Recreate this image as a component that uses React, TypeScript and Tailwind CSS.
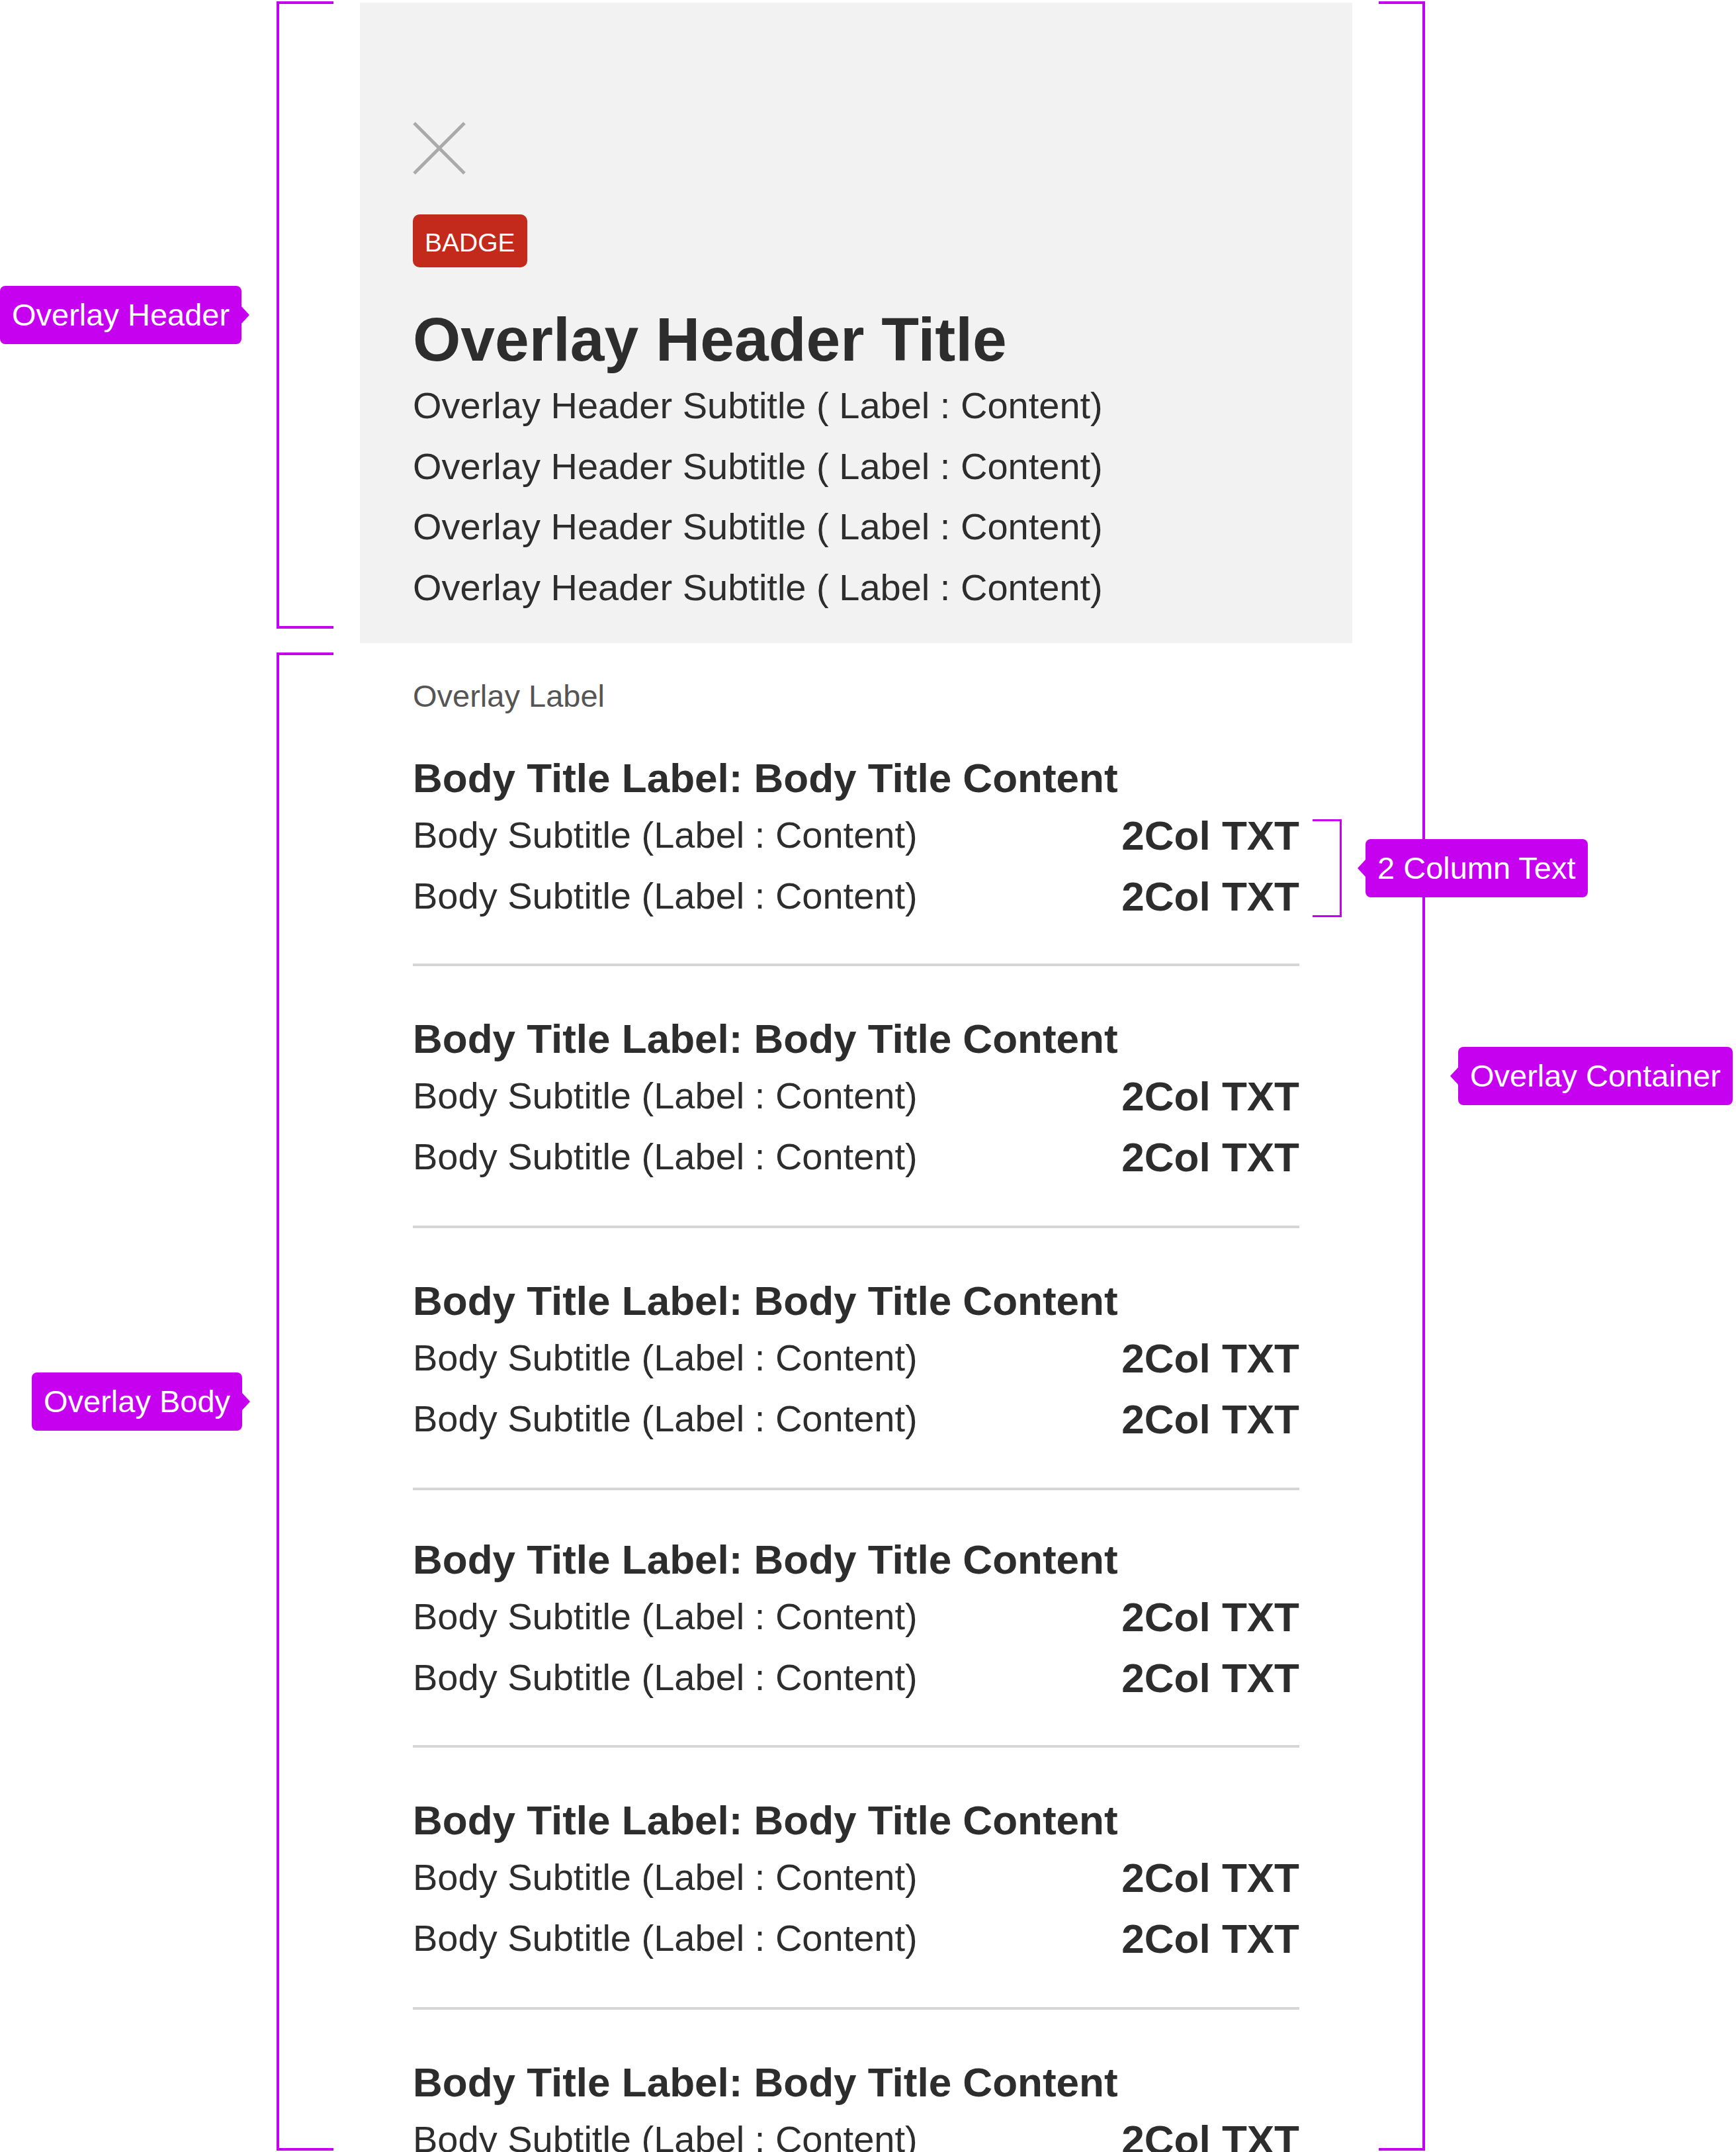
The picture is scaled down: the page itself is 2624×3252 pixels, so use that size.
const blocks = [
  { pt: "pt-[56px]", pb: "pb-[56px]", note: true },
  { pt: "pt-[70px]", pb: "pb-[58px]", note: false },
  { pt: "pt-[70px]", pb: "pb-[58px]", note: false },
  { pt: "pt-[65px]", pb: "pb-[56px]", note: false },
  { pt: "pt-[70px]", pb: "pb-[58px]", note: false },
  { pt: "pt-[70px]", pb: "pb-[58px]", note: false },
];

const subtitles = [1, 2, 3, 4];

// annotation tag with the little pointer on one side
const Tag = ({ label, side }: { label: string; side: "left" | "right" }) => (
  <div className="relative h-[88px] shrink-0 rounded-[8px] bg-[#c501f0] px-[18px] text-[47px] leading-[88px] whitespace-nowrap text-white">
    {label}
    {side === "right" ? (
      <svg
        className="absolute top-[31px] right-[-12px]"
        width="12"
        height="26"
        viewBox="0 0 12 26"
      >
        <polygon points="0,0 12,13 0,26" fill="#c501f0" />
      </svg>
    ) : (
      <svg
        className="absolute top-[31px] left-[-12px]"
        width="12"
        height="26"
        viewBox="0 0 12 26"
      >
        <polygon points="12,0 0,13 12,26" fill="#c501f0" />
      </svg>
    )}
  </div>
);

const BodyBlock = ({ pt, pb, note }: { pt: string; pb: string; note: boolean }) => (
  <div className={`border-b-4 border-[#d6d6d6] ${pt} ${pb}`}>
    <div className="text-[62px] leading-[80px] font-bold whitespace-nowrap">
      Body Title Label: Body Title Content
    </div>
    <div className="relative">
      {[0, 1].map((i) => (
        <div key={i} className="flex h-[92px] items-baseline justify-between">
          <span className="text-[56px] leading-[92px] whitespace-nowrap">
            Body Subtitle (Label : Content)
          </span>
          <span className="relative top-[3px] text-[62px] leading-[87px] font-bold whitespace-nowrap">
            2Col TXT
          </span>
        </div>
      ))}
      {note && (
        <div className="absolute top-[22px] left-full ml-[20px] flex h-[148px] items-center">
          <div className="h-full w-[44px] border-t-[3px] border-r-[3px] border-b-[3px] border-[#c501f0]" />
          <div className="ml-[36px]">
            <Tag label="2 Column Text" side="left" />
          </div>
        </div>
      )}
    </div>
  </div>
);

const App = () => {
  return (
    <div className="flex h-[3252px] w-[2624px] items-start overflow-hidden bg-white font-['Liberation_Sans',Arial,sans-serif] text-[#2d2d2d]">
      {/* left annotations */}
      <div className="flex w-[504px] shrink-0 flex-col pt-[2px]">
        <div className="flex h-[948px] items-center justify-between">
          <Tag label="Overlay Header" side="right" />
          <div className="h-full w-[86px] border-t-4 border-b-4 border-l-4 border-[#c501f0]" />
        </div>
        <div className="mt-[36px] flex h-[2264px] items-center justify-between pl-[48px]">
          <Tag label="Overlay Body" side="right" />
          <div className="h-full w-[86px] border-t-4 border-b-4 border-l-4 border-[#c501f0]" />
        </div>
      </div>

      <div className="ml-[40px] w-[1500px] shrink-0 pt-[4px]">
        {/* Overlay header */}
        <div className="bg-[#f2f2f2] px-[80px] pt-[180px] pb-[39px]">
          <svg width="80" height="80" viewBox="0 0 80 80">
            <line x1="2" y1="2" x2="78" y2="78" stroke="#aaaaaa" strokeWidth="5" />
            <line x1="78" y1="2" x2="2" y2="78" stroke="#aaaaaa" strokeWidth="5" />
          </svg>
          <div className="mt-[60px] inline-block h-[80px] rounded-[10px] bg-[#c42a1c] px-[18px] pt-[5px] text-[39px] leading-[75px] text-white">
            BADGE
          </div>
          <div className="mt-[57px] text-[93px] leading-[104px] font-bold whitespace-nowrap">
            Overlay Header Title
          </div>
          <div className="mt-[2px]">
            {subtitles.map((n) => (
              <div key={n} className="text-[56px] leading-[91.5px] whitespace-nowrap">
                Overlay Header Subtitle ( Label : Content)
              </div>
            ))}
          </div>
        </div>

        {/* Overlay body */}
        <div className="px-[80px]">
          <div className="mt-[52px] text-[47px] leading-[56px] text-[#555555]">
            Overlay Label
          </div>
          {blocks.map((b, i) => (
            <BodyBlock key={i} pt={b.pt} pb={b.pb} note={b.note} />
          ))}
        </div>
      </div>

      {/* right annotation */}
      <div className="ml-[40px] mt-[2px] flex h-[3248px] shrink-0 items-center">
        <div className="h-full w-[70px] border-t-4 border-r-4 border-b-4 border-[#c501f0]" />
        <div className="ml-[50px]">
          <Tag label="Overlay Container" side="left" />
        </div>
      </div>
    </div>
  );
};

export default App;
